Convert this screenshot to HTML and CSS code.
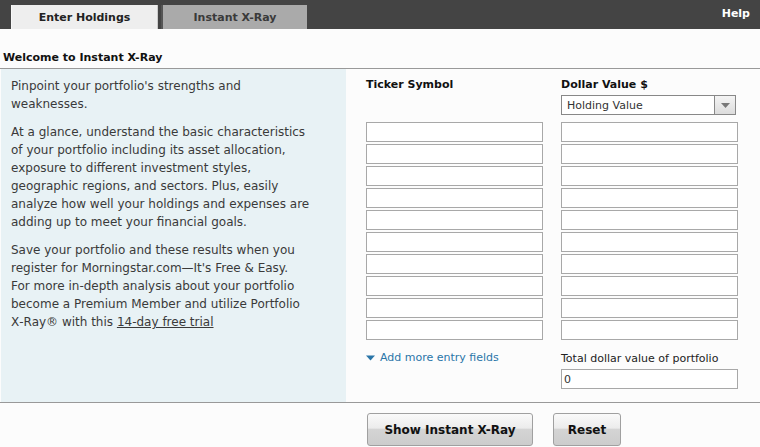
FILE: index.html
```html
<!DOCTYPE html>
<html>
<head>
<meta charset="utf-8">
<link rel="stylesheet" href="styles.css">
</head>
<body>
<div class="topbar">
  <div class="tabs">
    <div class="tab tab-active">Enter Holdings</div>
    <div class="tab tab-inactive">Instant X-Ray</div>
  </div>
  <div class="help">Help</div>
</div>
<div class="titlebar"><h1 class="title">Welcome to Instant X-Ray</h1></div>
<div class="main">
  <div class="intro">
    <p>Pinpoint your portfolio's strengths and weaknesses.</p>
    <p>At a glance, understand the basic characteristics of your portfolio including its asset allocation, exposure to different investment styles, geographic regions, and sectors. Plus, easily analyze how well your holdings and expenses are adding up to meet your financial goals.</p>
    <p>Save your portfolio and these results when you register for Morningstar.com—It's Free &amp; Easy.<br>For more in-depth analysis about your portfolio become a Premium Member and utilize Portfolio X&#8209;Ray® with this <a class="trial" href="#">14-day free trial</a></p>
  </div>
  <div class="entry">
    <div class="col">
      <div class="col-head">Ticker Symbol</div>
      <div class="spacer"></div>
      <div class="fields">
        <input class="field" type="text"><input class="field" type="text"><input class="field" type="text"><input class="field" type="text"><input class="field" type="text"><input class="field" type="text"><input class="field" type="text"><input class="field" type="text"><input class="field" type="text"><input class="field" type="text">
      </div>
      <a class="more" href="#"><svg class="caret" width="9" height="6" viewBox="0 0 9 6"><path d="M0 0.5H9L4.5 5.5Z" fill="#2a75a8"/></svg>Add more entry fields</a>
    </div>
    <div class="col">
      <div class="col-head">Dollar Value $</div>
      <div class="select">
        <span class="select-text">Holding Value</span>
        <span class="select-btn"><svg width="9" height="5" viewBox="0 0 9 5"><path d="M0 0H9L4.5 5Z" fill="#777"/></svg></span>
      </div>
      <div class="fields">
        <input class="field" type="text"><input class="field" type="text"><input class="field" type="text"><input class="field" type="text"><input class="field" type="text"><input class="field" type="text"><input class="field" type="text"><input class="field" type="text"><input class="field" type="text"><input class="field" type="text">
      </div>
      <div class="total-label">Total dollar value of portfolio</div>
      <input class="field total" type="text" value="0">
    </div>
  </div>
</div>
<div class="actions">
  <button class="btn btn-show">Show Instant X-Ray</button>
  <button class="btn btn-reset">Reset</button>
</div>
</body>
</html>
```
FILE: styles.css
```css
html, body {
  margin: 0;
  padding: 0;
  background: #fcfcfc;
  font-family: "DejaVu Sans", Verdana, sans-serif;
  font-size: 11px;
  color: #333;
}
.topbar {
  height: 29px;
  background: #444;
  display: flex;
  justify-content: space-between;
  align-items: flex-end;
  padding-left: 11px;
  padding-right: 10px;
}
.tabs {
  display: flex;
  gap: 3px;
}
.tab {
  width: 147px;
  height: 24px;
  box-sizing: border-box;
  display: flex;
  align-items: center;
  justify-content: center;
  font-weight: bold;
  font-size: 11px;
}
.tab-active {
  background: #eeeeee;
  color: #222;
  border-left: 1px solid #f8f8f8;
  border-right: 1px solid #ccc;
}
.tab-inactive {
  background: #aaaaaa;
  color: #3a3a3a;
  border-left: 2px solid #555;
  width: 146px;
}
.help {
  align-self: flex-start;
  margin-top: 7px;
  color: #fff;
  font-weight: bold;
  font-size: 11px;
}
.titlebar {
  height: 39px;
  border-bottom: 1px solid #999;
  display: flex;
  align-items: flex-end;
  padding-left: 3px;
}
.title {
  margin: 0 0 4px 0;
  font-size: 11px;
  font-weight: bold;
  color: #111;
}
.main {
  display: flex;
  height: 333px;
  border-bottom: 1px solid #999;
}
.intro {
  width: 345px;
  margin-left: 1px;
  box-sizing: border-box;
  background: #e8f2f5;
  padding: 8px 30px 0 10px;
  font-size: 12px;
  line-height: 18px;
  color: #3a3a3a;
}
.intro p {
  margin: 0 0 10px 0;
}
.trial {
  color: #3a3a3a;
  text-decoration: underline;
}
.entry {
  display: flex;
  gap: 18px;
  padding-left: 20px;
  padding-top: 9px;
}
.col {
  width: 177px;
  display: flex;
  flex-direction: column;
}
.col-head {
  font-weight: bold;
  font-size: 11px;
  color: #111;
  height: 17px;
  line-height: 14px;
}
.spacer {
  height: 20px;
}
.select {
  width: 175px;
  height: 20px;
  box-sizing: border-box;
  border: 1px solid #888;
  background: #fff;
  display: flex;
}
.select-text {
  flex: 1;
  padding-left: 5px;
  line-height: 19px;
  font-size: 11px;
  color: #333;
}
.select-btn {
  width: 20px;
  border-left: 1px solid #888;
  background: linear-gradient(#f4f4f4, #dcdcdc);
  display: flex;
  align-items: center;
  justify-content: center;
}
.fields {
  display: flex;
  flex-direction: column;
  gap: 2px;
  margin-top: 7px;
}
.field {
  width: 177px;
  height: 20px;
  box-sizing: border-box;
  border: 1px solid #a8a8a8;
  background: #fff;
  margin: 0;
  padding: 0 2px;
  font-family: "DejaVu Sans", Verdana, sans-serif;
  font-size: 11px;
  color: #333;
  outline: none;
}
.more {
  margin-top: 11px;
  color: #2a75a8;
  text-decoration: none;
  font-size: 11px;
  display: flex;
  align-items: center;
  gap: 5px;
}
.caret {
  display: block;
}
.total-label {
  margin-top: 12px;
  font-size: 11px;
  color: #222;
  height: 17px;
}
.total {
  margin-top: 0;
}
.actions {
  display: flex;
  gap: 20px;
  padding-left: 367px;
  padding-top: 10px;
}
.btn {
  height: 33px;
  box-sizing: border-box;
  border: 1px solid #a0a0a0;
  border-radius: 3px;
  background: linear-gradient(#fafafa 0%, #ececec 45%, #d4d4d4 50%, #cccccc 100%);
  font-family: "DejaVu Sans", Verdana, sans-serif;
  font-weight: bold;
  font-size: 12px;
  color: #111;
  padding: 0;
}
.btn-show {
  width: 166px;
}
.btn-reset {
  width: 68px;
}
```
